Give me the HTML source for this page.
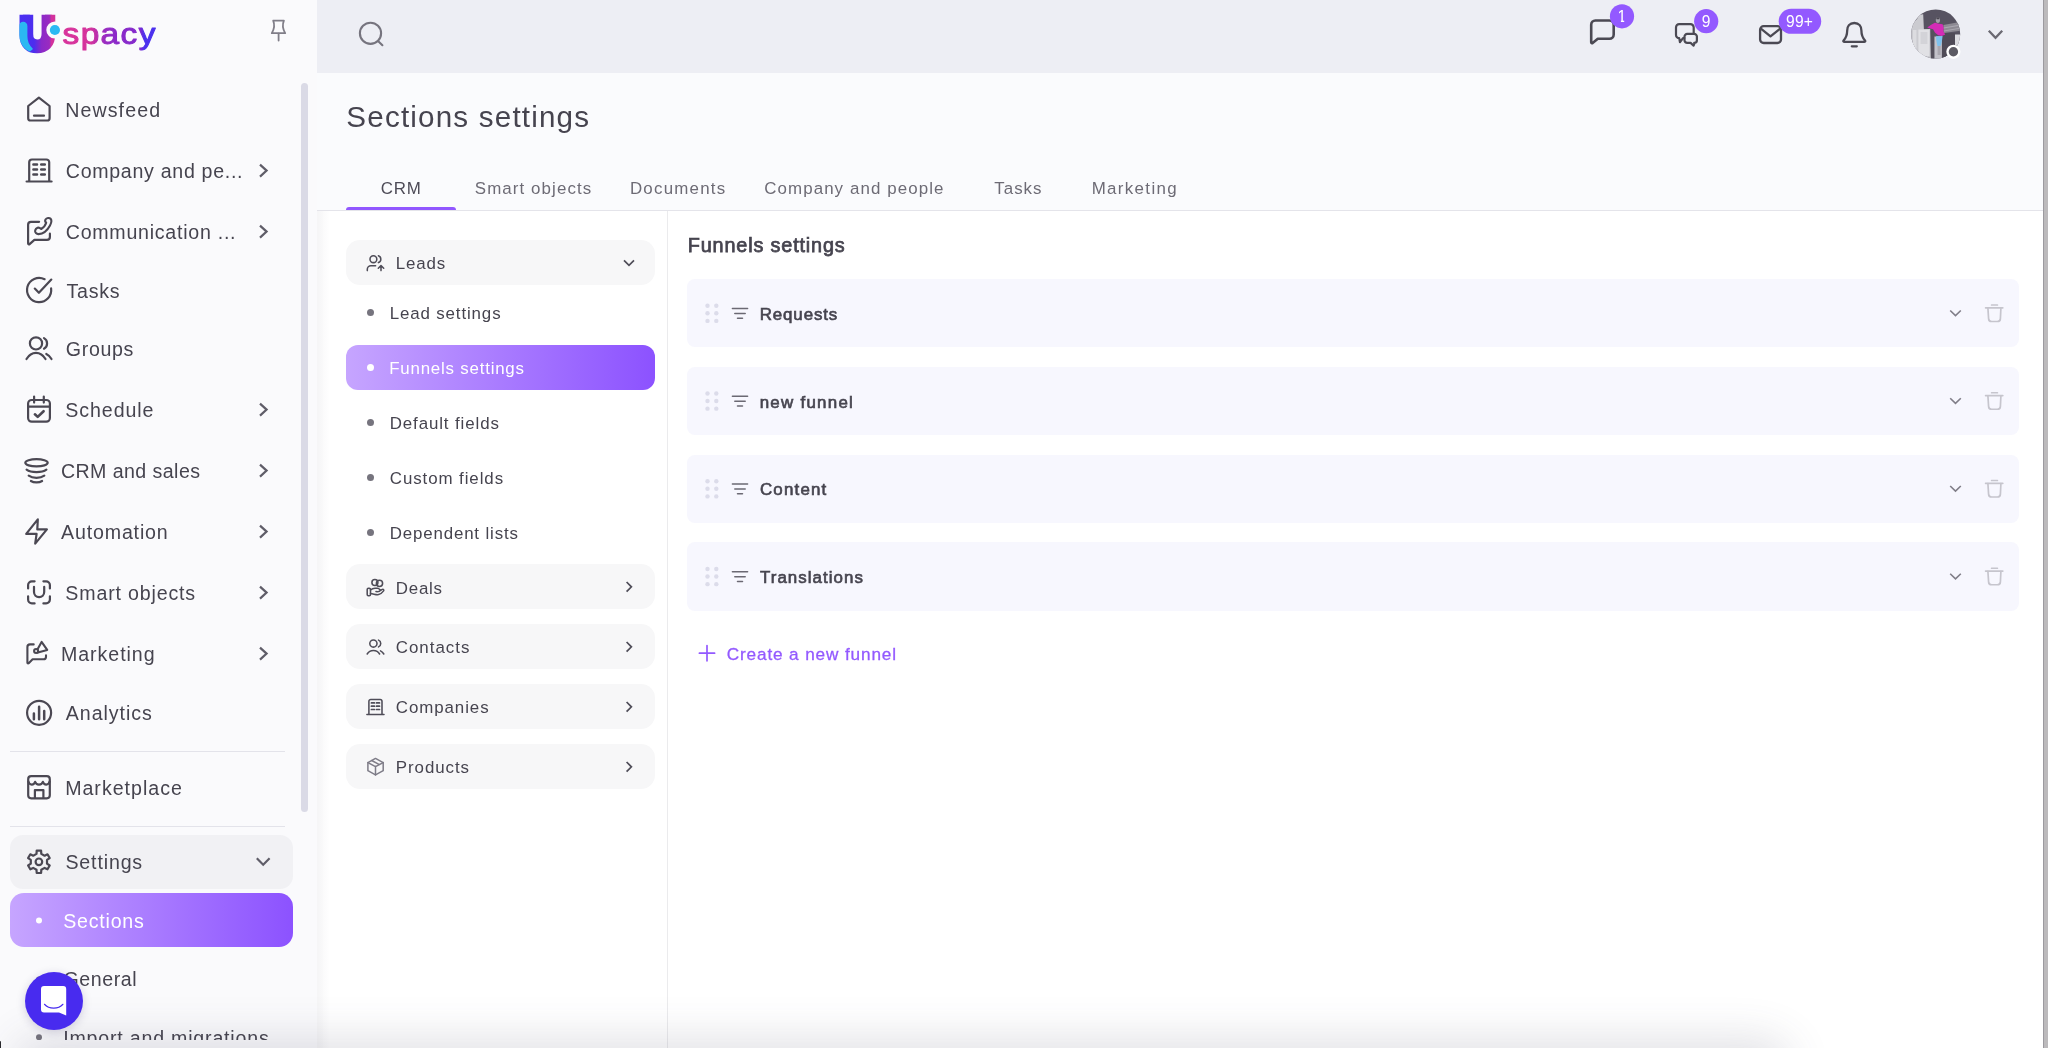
<!DOCTYPE html>
<html lang="en">
<head>
<meta charset="utf-8">
<title>Sections settings</title>
<style>
*{box-sizing:border-box;margin:0;padding:0}
html,body{width:2048px;height:1048px;overflow:hidden;background:#fff}
body{font-family:"Liberation Sans",sans-serif;color:#46444f;position:relative}
.abs{position:absolute}
svg{position:absolute;overflow:visible}
.ic{fill:none;stroke:#4b4853;stroke-width:2.2;stroke-linecap:round;stroke-linejoin:round}
.t{position:absolute;white-space:nowrap;line-height:1}

/* ---------- sidebar ---------- */
#side{position:absolute;left:0;top:0;width:317px;height:1048px;background:#fafafc;overflow:hidden}
#sideshadow{position:absolute;left:317px;top:0;width:12px;height:1048px;background:linear-gradient(90deg,rgba(70,68,90,.055),rgba(70,68,90,0))}
.nav{font-size:19.4px;letter-spacing:.55px;color:#46444f}
#sb{position:absolute;left:301px;top:83px;width:7px;height:729px;border-radius:4px;background:#dadae6}
.hr{position:absolute;left:10px;width:275px;height:1px;background:#e3e3ea}
#setbox{position:absolute;left:10px;top:835.4px;width:282.6px;height:53.4px;border-radius:13px;background:#f1f1f4}
#secbox{position:absolute;left:10px;top:893.2px;width:282.6px;height:53.8px;border-radius:14px;background:linear-gradient(90deg,#c6a5ff 0%,#a677ff 55%,#8c52ff 100%)}

/* ---------- topbar ---------- */
#top{position:absolute;left:317px;top:0;width:1726px;height:73px;background:#edeef4}
#rbar{position:absolute;left:2043px;top:0;width:5px;height:1048px;background:#bcbabc;border-left:1px solid #9c9a9f}
.badge{position:absolute;background:#9359ff;color:#fff;border-radius:12px;height:24px;font-size:15px;text-align:center;line-height:24px}

/* ---------- main ---------- */
#head{position:absolute;left:317px;top:73px;width:1726px;height:137px;background:#fafbfd}
#tabline{position:absolute;left:317px;top:210px;width:1726px;height:1px;background:#e4e4ea}
#tabact{position:absolute;left:346px;top:206.7px;width:110.2px;height:3.4px;border-radius:3px 3px 0 0;background:#9157ff}
.tab{font-size:17px;letter-spacing:.55px;color:#6a6872}
#vline{position:absolute;left:667px;top:211px;width:1px;height:837px;background:#ebebed}
.grp{position:absolute;left:346px;width:308.7px;height:45px;border-radius:14px;background:#f7f7f8}
.sub{font-size:17px;letter-spacing:.5px;color:#46444f}
.dot{position:absolute;width:7px;height:7px;border-radius:50%;background:#76747e}
#subact{position:absolute;left:346px;top:345px;width:308.7px;height:45px;border-radius:12px;background:linear-gradient(90deg,#c6a5ff 0%,#a677ff 55%,#8c52ff 100%)}
.row{position:absolute;left:687.4px;width:1331.6px;height:67px;border-radius:8px;background:#f7f7fe}
.rt{font-size:17px;font-weight:bold;letter-spacing:.25px;color:#46444f}
</style>
</head>
<body>

<!-- ================= SIDEBAR ================= -->
<div id="side">
  <svg id="logo" width="170" height="70" viewBox="0 0 170 70" style="left:0;top:0;will-change:transform">
    <defs>
      <linearGradient id="lgU" gradientUnits="userSpaceOnUse" x1="-0.9" y1="0" x2="34.4" y2="0">
        <stop offset="0" stop-color="#4a2ff2"/><stop offset=".42" stop-color="#4c2eee"/><stop offset=".62" stop-color="#8a29c9"/><stop offset=".84" stop-color="#9a2bc0"/><stop offset=".9" stop-color="#d2329c"/><stop offset="1" stop-color="#d2329c"/>
      </linearGradient>
      <linearGradient id="lgT" gradientUnits="userSpaceOnUse" x1="62.6" y1="0" x2="144.9" y2="0">
        <stop offset="0" stop-color="#d8339b"/><stop offset=".3" stop-color="#d4329c"/><stop offset=".45" stop-color="#9a2bc0"/><stop offset=".55" stop-color="#8c29c8"/><stop offset=".83" stop-color="#8229cc"/><stop offset=".88" stop-color="#4b30ee"/><stop offset="1" stop-color="#4b30ee"/>
      </linearGradient>
      <clipPath id="utop"><rect x="10" y="14.8" width="60" height="50"/></clipPath>
      <clipPath id="uclip"><path d="M19.4 14.8 H33.4 V35.6 a3.75 3.75 0 0 0 8.2 0 V14.8 H54.9 V35.6 a17.75 17.75 0 0 1 -35.5 0 Z"/></clipPath>
    </defs>
    <g clip-path="url(#utop)"><text x="0" y="0" font-family="Liberation Sans, sans-serif" font-weight="bold" font-size="47.3" fill="url(#lgU)" stroke="url(#lgU)" stroke-width="6.6" stroke-linejoin="miter" transform="translate(20 48.9) scale(1.02 1.157)">U</text></g>
    <g clip-path="url(#uclip)">
      <path d="M19 26 a4.2 4.2 0 0 1 8.4 0 V36 C27.4 41 29 45 33 49 L27 54 L19 44 Z" fill="#2bb8f2"/>
    </g>
    <circle cx="54.9" cy="30" r="8.6" fill="#fafafc"/>
    <circle cx="54.9" cy="30" r="5.1" fill="#2bb9f3"/>
    <text x="62.6" y="43.6" font-family="Liberation Sans, sans-serif" font-size="29.6" letter-spacing="1.2" fill="url(#lgT)" stroke="url(#lgT)" stroke-width="1.0" stroke-linejoin="round" transform="translate(62.6 0) scale(1.13 1) translate(-62.6 0)">spacy</text>
  </svg>

  <div id="sb"></div>
  <div id="setbox"></div>
  <div id="secbox"></div>
  <div class="hr" style="top:751px"></div>
  <div class="hr" style="top:826px"></div>
<svg id="navic" width="317" height="1048" viewBox="0 0 317 1048" style="left:0;top:0">
<g class="ic" stroke-width="2.3">
<!-- newsfeed -->
<path d="M38.9 97.7 L28.2 106 V118.2 a2.3 2.3 0 0 0 2.3 2.3 H47.3 a2.3 2.3 0 0 0 2.3 -2.3 V106 Z"/>
<path d="M34 115.7 H44"/>
<!-- company -->
<path d="M29.2 181 V162.3 a2.8 2.8 0 0 1 2.8 -2.8 H46.4 a2.8 2.8 0 0 1 2.8 2.8 V181"/>
<path d="M26.6 181.5 H51.6"/>
<path d="M33.4 164.6 H37 M41.2 164.6 H44.8 M33.4 169.5 H37 M41.2 169.5 H44.8 M33.4 174.4 H37 M41.2 174.4 H44.8" stroke-width="2.5"/>
<!-- communication -->
<path d="M39.1 221.8 H31 a2.9 2.9 0 0 0 -2.9 2.9 V243.4 a0.9 0.9 0 0 0 1.5 0.7 L34.4 239.9 H47 a2.9 2.9 0 0 0 2.9 -2.9 V233.7"/>
<path stroke-width="2.1" d="M35.2 230.4 C34.6 232.6 36.6 234.2 38.6 234.1 C43 233.9 47.4 230.2 50 225.4 C51.2 223.2 52 220.4 50.6 218.8 C49.4 217.4 46.6 217.8 45.5 219.5 C44.8 220.6 45.2 221.8 46.2 222.8 C45.4 225.4 43.6 227.6 41.2 229 C40 228 38.6 227.4 37.6 227.8 C36.4 228.3 35.5 229.3 35.2 230.4 Z"/>
<!-- tasks -->
<path d="M51.1 288.3 A12.1 12.1 0 1 1 44.6 279.2"/>
<path d="M34.8 288.6 L38.9 292.8 L51.3 279.6"/>
<!-- groups -->
<circle cx="36" cy="343.4" r="6.1"/>
<path d="M44 338.1 A6.1 6.1 0 0 1 44 348.7"/>
<path d="M26.5 359 C29 354.8 32.4 352.9 36 352.9 C39.6 352.9 43 354.8 45.5 359"/>
<path d="M46.3 354 C48.4 355 50.2 356.8 51.5 359"/>
<!-- schedule -->
<rect x="28.1" y="400" width="21.8" height="21.7" rx="3.6"/>
<path d="M28.1 406.7 H49.9 M34.1 396.6 V402.6 M43.8 396.6 V402.6"/>
<path d="M34.9 414.3 L37.7 416.9 L43.6 411.2" stroke-width="2.6"/>
<!-- crm -->
<ellipse cx="36.5" cy="462.8" rx="11.2" ry="3.6"/>
<path d="M26.6 469.6 C31 472.9 42 472.9 46.4 469.6 M28.7 475.6 C32.6 478.5 40.4 478.5 44.3 475.6 M30.9 481 C33.8 482.9 39.2 482.9 42.1 481"/>
<!-- automation -->
<path d="M37.8 519.4 L26.2 533.9 H36.6 L35.2 543.6 L46.9 529.4 H37.3 Z"/>
<!-- smart objects -->
<path d="M28.1 588.4 V585.1 a3.8 3.8 0 0 1 3.8 -3.8 H34.6 M43.4 581.3 H46.1 a3.8 3.8 0 0 1 3.8 3.8 V588.4 M49.9 596.3 V599.6 a3.8 3.8 0 0 1 -3.8 3.8 H43.4 M34.6 603.4 H31.9 a3.8 3.8 0 0 1 -3.8 -3.8 V596.3"/>
<path d="M34 586.8 V592 a5.1 5.1 0 0 0 10.2 0 V586.8"/>
<!-- marketing -->
<g stroke-width="2.1">
<path d="M33.7 644.4 H30 a2.6 2.6 0 0 0 -2.6 2.6 V662.6 a0.8 0.8 0 0 0 1.3 0.6 L32.6 659.3 H43.4 a2.6 2.6 0 0 0 2.6 -2.6 V655.4"/>
<path d="M37.4 649.4 L41.6 641.9 L47.2 649.9 L37.9 652.6"/>
<circle cx="36.1" cy="651" r="2"/>
</g>
<!-- analytics -->
<circle cx="39.1" cy="712.8" r="12"/>
<path d="M33.9 713.6 V719.2 M39.1 706.8 V719.2 M44.2 711 V719.2" stroke-width="2.5"/>
<!-- marketplace -->
<rect x="28.2" y="776.2" width="21.6" height="22.1" rx="3"/>
<path d="M28.4 781.6 C29.4 785.6 34 785.6 35.1 781.8 C36.2 785.6 41.8 785.6 42.9 781.8 C44 785.6 48.6 785.6 49.6 781.6"/>
<path d="M34.9 798 V790.1 H43.4 V798"/>
<!-- settings gear -->
<path d="M36.5 853.9 L36.7 850.6 L41.1 850.6 L41.3 853.9 L44.6 855.7 L47.5 854.3 L49.7 858.1 L47.0 859.9 L47.0 863.7 L49.7 865.5 L47.5 869.3 L44.6 867.9 L41.3 869.7 L41.1 873.0 L36.7 873.0 L36.5 869.7 L33.2 867.9 L30.3 869.3 L28.1 865.5 L30.8 863.7 L30.8 859.9 L28.1 858.1 L30.3 854.3 L33.2 855.7 Z"/>
<circle cx="38.9" cy="861.8" r="3.3"/>
</g>
<!-- chevrons -->
<g fill="none" stroke="#5f5d68" stroke-width="2.2" stroke-linejoin="miter">
<path d="M260 164.6 L266.6 170.6 L260 176.6"/>
<path d="M260 225.6 L266.6 231.6 L260 237.6"/>
<path d="M260 403.6 L266.6 409.6 L260 415.6"/>
<path d="M260 464.6 L266.6 470.6 L260 476.6"/>
<path d="M260 525.6 L266.6 531.6 L260 537.6"/>
<path d="M260 586.6 L266.6 592.6 L260 598.6"/>
<path d="M260 647.6 L266.6 653.6 L260 659.6"/>
<path d="M256.8 858.3 L263.2 864.7 L269.6 858.3"/>
</g>
<!-- pin -->
<g fill="none" stroke="#807e88" stroke-width="1.8" stroke-linejoin="round" stroke-linecap="round">
<path d="M273.2 20.6 H283.9 C282 25 282.2 28 285.2 33.2 H271.8 C274.8 28 275 25 273.2 20.6 Z"/>
<path d="M278.6 33.6 V40.6"/>
</g>
<!-- bullets -->
<circle cx="39" cy="920.5" r="3" fill="#fff"/>
<circle cx="39" cy="979.5" r="3" fill="#76747e"/>
<circle cx="39" cy="1037.2" r="3" fill="#76747e"/>
</svg>

</div>
<div id="sideshadow"></div>

<!-- ================= TOPBAR ================= -->
<div id="top"></div>
<svg id="topic" width="1731" height="72" viewBox="317 0 1731 72" style="left:317px;top:0;will-change:transform">
  <defs><clipPath id="avc"><circle cx="1935.7" cy="34" r="24.5"/></clipPath></defs>
  <!-- search -->
  <g fill="none" stroke="#76747e" stroke-width="2.1" stroke-linecap="round">
    <circle cx="370.5" cy="33.3" r="10.6"/><path d="M378 41 L382.4 45.2"/>
  </g>
  <g fill="none" stroke="#4b4953" stroke-linecap="round" stroke-linejoin="round">
    <!-- chat -->
    <path stroke-width="2.6" d="M1595.4 20.5 H1609.5 a4.2 4.2 0 0 1 4.2 4.2 V34.5 a4.2 4.2 0 0 1 -4.2 4.2 H1597.8 L1592.6 42.9 a0.85 0.85 0 0 1 -1.4 -0.65 V24.7 a4.2 4.2 0 0 1 4.2 -4.2 Z"/>
    <!-- chats -->
    <g stroke-width="2.2">
    <path d="M1684.3 38.1 H1683 L1680 42.2 L1679.2 38.1 a3.2 3.2 0 0 1 -3.2 -3.2 V27.4 a3.2 3.2 0 0 1 3.2 -3.2 H1690.5 a3.2 3.2 0 0 1 3.2 3.2 V33.6"/>
    <path d="M1687.2 33.9 H1694.2 a2.7 2.7 0 0 1 2.7 2.7 V40.2 a2.7 2.7 0 0 1 -2.7 2.7 H1694.6 L1693.6 45.6 L1690.6 42.9 H1687.2 a2.7 2.7 0 0 1 -2.7 -2.7 V36.6 a2.7 2.7 0 0 1 2.7 -2.7 Z"/>
    </g>
    <!-- mail -->
    <g stroke-width="2.3">
    <rect x="1760.1" y="26.2" width="20.9" height="16.8" rx="3.6"/>
    <path d="M1761.2 28.8 L1770.5 36.4 L1779.9 28.8"/>
    </g>
    <!-- bell -->
    <g stroke-width="2.3">
    <path d="M1854.3 23 C1849.4 23 1847.2 26.8 1847.2 30.4 C1847.2 35.6 1845.4 38.4 1843.6 40.4 C1843 41.1 1843.5 41.9 1844.4 41.9 H1864.2 C1865.1 41.9 1865.6 41.1 1865 40.4 C1863.2 38.4 1861.4 35.6 1861.4 30.4 C1861.4 26.8 1859.2 23 1854.3 23 Z"/>
    <path d="M1851.8 46.3 H1856.8"/>
    </g>
  </g>
  <!-- avatar -->
  <g clip-path="url(#avc)">
    <rect x="1910" y="8" width="52" height="52" fill="#575361"/>
    <path d="M1911.1 24.2 L1917 19 L1919.2 14.7 L1923.2 14.3 L1923.9 29.3 L1930.2 28.9 L1930.9 58.6 H1910 Z" fill="#cbcbd0"/>
    <path d="M1918.4 29.6 H1929.4 V56 H1918.4 Z" fill="#e1e1e5"/>
    <path d="M1920.6 32 H1927.4 V44 H1920.6 Z" fill="#d3d3d8"/>
    <path d="M1913 30 H1916.4 V52 H1913 Z" fill="#dcdce0"/>
    <path d="M1934.2 36.6 H1942 V59 H1934.2 Z" fill="#c2c1c8"/>
    <path d="M1930.9 30.8 H1934.3 V59 H1930.9 Z" fill="#55515c"/>
    <path d="M1941.9 33 H1955.2 V51 L1946 59 H1941.9 Z" fill="#4f4b57"/>
    <path d="M1943.4 24.9 L1959.5 22 L1960.5 30.8 L1943.7 33 Z" fill="#8d8a93"/>
    <path d="M1943.5 27.4 L1960 24.6 V25.8 L1943.6 28.6 Z M1943.6 30.4 L1960 27.8 V28.8 L1943.6 31.4 Z" fill="#aaa7b0"/>
    <path d="M1955 34.4 H1961 V45.6 H1955 Z" fill="#dcdce1"/>
    <ellipse cx="1937.9" cy="19.9" rx="2.1" ry="3" fill="#a29ea8"/>
    <path d="M1936.4 17.2 h3 v2 h-3 Z" fill="#4a4651"/>
    <path d="M1927.2 27.5 L1931.6 24.5 L1934.9 22.7 L1939 23.8 L1942.6 24.2 L1943.7 27.8 L1943.4 31.5 L1945.2 34.4 L1941.9 35.9 L1938.2 35.2 L1934.9 32.6 L1933.1 29.3 L1929.4 28.2 Z" fill="#d42cb6"/>
    <path d="M1936 36.3 L1942.6 35.9 L1941.9 41 L1940.8 45.8 L1937.5 46.2 L1936.4 41 Z" fill="#7fc1ec"/>
    <path d="M1937.6 46 h3 v9 h-3 Z" fill="#a9a7af"/>
  </g>
  <circle cx="1953.4" cy="51.8" r="7.1" fill="#fff"/>
  <circle cx="1953.4" cy="51.8" r="4.7" fill="#5d5b64"/>
  <path d="M1988.8 30.8 L1995.5 37.8 L2002.2 30.8" fill="none" stroke="#6b6972" stroke-width="2.3"/>
  <!-- badges -->
  <circle cx="1622" cy="16.3" r="12.1" fill="#9359ff"/>
  <circle cx="1706.2" cy="21.2" r="12.1" fill="#9359ff"/>
  <rect x="1778.7" y="8.8" width="42.5" height="25" rx="12.5" fill="#9359ff"/>
  <g font-family="Liberation Sans, sans-serif" font-size="15.6" fill="#fff" text-anchor="middle">
    <text x="1621.9" y="21.8">1</text>
    <path d="M1617 20 h3.9 v2.8 h-3.9 Z M1624.2 20 h3 v2.8 h-3 Z" fill="#9359ff"/>
    <text x="1706.2" y="26.7">9</text>
    <text x="1799.6" y="26.8" letter-spacing="0.3">99+</text>
  </g>
</svg>


<!-- ================= MAIN ================= -->
<div id="head"></div>
<div id="tabline"></div>
<div id="tabact"></div>
<div id="vline"></div>
<div class="grp" style="top:240px"></div>
<div id="subact"></div>
<div class="dot" style="left:367px;top:309px"></div>
<div class="dot" style="left:367px;top:364px;background:#fff"></div>
<div class="dot" style="left:367px;top:419px"></div>
<div class="dot" style="left:367px;top:474px"></div>
<div class="dot" style="left:367px;top:529px"></div>
<div class="grp" style="top:564px"></div>
<div class="grp" style="top:624px"></div>
<div class="grp" style="top:684px"></div>
<div class="grp" style="top:744px"></div>

<div class="row" style="top:279px;height:68px"></div>
<div class="row" style="top:367px;height:68px"></div>
<div class="row" style="top:455px;height:68px"></div>
<div class="row" style="top:542px;height:69px"></div>
<svg id="mainic" width="1731" height="838" viewBox="317 210 1731 838" style="left:317px;top:210px">
<g fill="none" stroke="#4f4d58" stroke-width="1.55" stroke-linecap="round" stroke-linejoin="round">
<!-- leads -->
<circle cx="373.4" cy="259.2" r="3.4"/>
<path d="M378.4 255.8 A3.6 3.6 0 0 1 378.4 262.6"/>
<path d="M367.3 270.6 V269.3 a3.6 3.6 0 0 1 3.6 -3.6 H375.6"/>
<path d="M381 270.6 V265.6 M378.3 268.2 L381 265.5 L383.7 268.2"/>
<!-- deals -->
<circle cx="374.9" cy="582.4" r="3"/>
<circle cx="379.5" cy="583.3" r="3.1"/>
<rect x="367.2" y="588.3" width="3.3" height="7.4" rx="1.2"/>
<path d="M370.5 590 C372 588.6 373.4 588.2 375 588.2 H377.6 C379 588.2 379.8 589.6 380.6 590.3 C379.8 591.6 378 591.8 376 591.6"/>
<path d="M380.6 590.3 L382.4 589.4 C383.4 589 384.2 590 383.6 590.9 C382 593 380 594.4 378.6 594.6 C376 595 373.6 593.8 370.5 593.6"/>
<!-- contacts -->
<circle cx="373.4" cy="643.5" r="3.6"/>
<path d="M378.5 640.1 A3.7 3.7 0 0 1 378.5 646.9"/>
<path d="M367.2 654 C368.6 651.6 370.8 650.5 373.4 650.5 C376 650.5 378.2 651.6 379.6 654"/>
<path d="M380.5 650.9 C381.9 651.6 383 652.6 383.8 654"/>
<!-- companies -->
<path d="M368.9 714.2 V701.4 a1.9 1.9 0 0 1 1.9 -1.9 H380.1 a1.9 1.9 0 0 1 1.9 1.9 V714.2"/>
<path d="M366.9 714.5 H384"/>
<path d="M371.4 702.9 H374.4 M376.5 702.9 H379.5 M371.4 706.2 H374.4 M376.5 706.2 H379.5 M371.4 709.5 H374.4 M376.5 709.5 H379.5" stroke-width="1.7"/>
</g>
<!-- products -->
<g fill="none" stroke="#7e7c87" stroke-width="1.5" stroke-linecap="round" stroke-linejoin="round">
<path d="M375.5 758.4 L383.2 762.6 V770.7 L375.5 774.9 L367.9 770.7 V762.6 Z"/>
<path d="M367.9 762.6 L375.5 766.6 L383.2 762.6 M375.5 766.6 V774.9 M371.7 760.5 L379.4 764.6"/>
</g>
<g fill="none" stroke="#4f4d58" stroke-width="1.7" stroke-linejoin="miter">
<path d="M624 260.4 L629 265.4 L634 260.4"/>
<path d="M626.6 582 L631.4 586.8 L626.6 591.6"/>
<path d="M626.6 642 L631.4 646.8 L626.6 651.6"/>
<path d="M626.6 702 L631.4 706.8 L626.6 711.6"/>
<path d="M626.6 762 L631.4 766.8 L626.6 771.6"/>
</g>
<g transform="translate(0 0.00)">
<g fill="#dcdcea"><circle cx="707.5" cy="305.7" r="2.2"/><circle cx="707.5" cy="313.3" r="2.2"/><circle cx="707.5" cy="320.9" r="2.2"/><circle cx="716.3" cy="305.7" r="2.2"/><circle cx="716.3" cy="313.3" r="2.2"/><circle cx="716.3" cy="320.9" r="2.2"/></g>
<path d="M732.4 308.5 H747.6 M734.8 313.4 H745.2 M737.5 318.3 H742.5" fill="none" stroke="#6b6973" stroke-width="1.5" stroke-linecap="round"/>
<path d="M1950.2 310.5 L1955.5 315.6 L1960.8 310.5" fill="none" stroke="#807e88" stroke-width="1.6"/>
<g fill="none" stroke="#c6c5cd" stroke-width="1.7" stroke-linecap="round" stroke-linejoin="round"><path d="M1985.6 307.8 H2002.8 M1991.6 305 H1997.4"/><path d="M1987.9 308 L1988.6 318.6 a3 3 0 0 0 3 2.9 H1997.4 a3 3 0 0 0 3 -2.9 L2000.9 308"/></g>
</g>
<g transform="translate(0 87.75)">
<g fill="#dcdcea"><circle cx="707.5" cy="305.7" r="2.2"/><circle cx="707.5" cy="313.3" r="2.2"/><circle cx="707.5" cy="320.9" r="2.2"/><circle cx="716.3" cy="305.7" r="2.2"/><circle cx="716.3" cy="313.3" r="2.2"/><circle cx="716.3" cy="320.9" r="2.2"/></g>
<path d="M732.4 308.5 H747.6 M734.8 313.4 H745.2 M737.5 318.3 H742.5" fill="none" stroke="#6b6973" stroke-width="1.5" stroke-linecap="round"/>
<path d="M1950.2 310.5 L1955.5 315.6 L1960.8 310.5" fill="none" stroke="#807e88" stroke-width="1.6"/>
<g fill="none" stroke="#c6c5cd" stroke-width="1.7" stroke-linecap="round" stroke-linejoin="round"><path d="M1985.6 307.8 H2002.8 M1991.6 305 H1997.4"/><path d="M1987.9 308 L1988.6 318.6 a3 3 0 0 0 3 2.9 H1997.4 a3 3 0 0 0 3 -2.9 L2000.9 308"/></g>
</g>
<g transform="translate(0 175.50)">
<g fill="#dcdcea"><circle cx="707.5" cy="305.7" r="2.2"/><circle cx="707.5" cy="313.3" r="2.2"/><circle cx="707.5" cy="320.9" r="2.2"/><circle cx="716.3" cy="305.7" r="2.2"/><circle cx="716.3" cy="313.3" r="2.2"/><circle cx="716.3" cy="320.9" r="2.2"/></g>
<path d="M732.4 308.5 H747.6 M734.8 313.4 H745.2 M737.5 318.3 H742.5" fill="none" stroke="#6b6973" stroke-width="1.5" stroke-linecap="round"/>
<path d="M1950.2 310.5 L1955.5 315.6 L1960.8 310.5" fill="none" stroke="#807e88" stroke-width="1.6"/>
<g fill="none" stroke="#c6c5cd" stroke-width="1.7" stroke-linecap="round" stroke-linejoin="round"><path d="M1985.6 307.8 H2002.8 M1991.6 305 H1997.4"/><path d="M1987.9 308 L1988.6 318.6 a3 3 0 0 0 3 2.9 H1997.4 a3 3 0 0 0 3 -2.9 L2000.9 308"/></g>
</g>
<g transform="translate(0 263.25)">
<g fill="#dcdcea"><circle cx="707.5" cy="305.7" r="2.2"/><circle cx="707.5" cy="313.3" r="2.2"/><circle cx="707.5" cy="320.9" r="2.2"/><circle cx="716.3" cy="305.7" r="2.2"/><circle cx="716.3" cy="313.3" r="2.2"/><circle cx="716.3" cy="320.9" r="2.2"/></g>
<path d="M732.4 308.5 H747.6 M734.8 313.4 H745.2 M737.5 318.3 H742.5" fill="none" stroke="#6b6973" stroke-width="1.5" stroke-linecap="round"/>
<path d="M1950.2 310.5 L1955.5 315.6 L1960.8 310.5" fill="none" stroke="#807e88" stroke-width="1.6"/>
<g fill="none" stroke="#c6c5cd" stroke-width="1.7" stroke-linecap="round" stroke-linejoin="round"><path d="M1985.6 307.8 H2002.8 M1991.6 305 H1997.4"/><path d="M1987.9 308 L1988.6 318.6 a3 3 0 0 0 3 2.9 H1997.4 a3 3 0 0 0 3 -2.9 L2000.9 308"/></g>
</g>
<path d="M699.4 653.2 H714.6 M707 645.6 V660.8" fill="none" stroke="#9359ff" stroke-width="1.7" stroke-linecap="round"/>
</svg>

<div id="txt" style="position:absolute;left:0;top:0;width:2048px;height:1048px;will-change:transform">
<div class="t" style="left:65.17px;top:101.00px;font-size:19.6px;letter-spacing:1.118px;color:#46444f">Newsfeed</div>
<div class="t" style="left:65.79px;top:162.00px;font-size:19.6px;letter-spacing:0.700px;color:#46444f">Company and pe...</div>
<div class="t" style="left:65.79px;top:223.00px;font-size:19.6px;letter-spacing:0.739px;color:#46444f">Communication ...</div>
<div class="t" style="left:66.53px;top:282.00px;font-size:19.6px;letter-spacing:0.746px;color:#46444f">Tasks</div>
<div class="t" style="left:65.79px;top:340.00px;font-size:19.6px;letter-spacing:0.675px;color:#46444f">Groups</div>
<div class="t" style="left:65.35px;top:401.00px;font-size:19.6px;letter-spacing:0.910px;color:#46444f">Schedule</div>
<div class="t" style="left:60.89px;top:462.00px;font-size:19.6px;letter-spacing:0.435px;color:#46444f">CRM and sales</div>
<div class="t" style="left:61.08px;top:523.00px;font-size:19.6px;letter-spacing:0.834px;color:#46444f">Automation</div>
<div class="t" style="left:65.35px;top:584.00px;font-size:19.6px;letter-spacing:0.836px;color:#46444f">Smart objects</div>
<div class="t" style="left:60.97px;top:645.00px;font-size:19.6px;letter-spacing:0.952px;color:#46444f">Marketing</div>
<div class="t" style="left:65.78px;top:704.00px;font-size:19.6px;letter-spacing:0.948px;color:#46444f">Analytics</div>
<div class="t" style="left:65.17px;top:779.00px;font-size:19.6px;letter-spacing:0.995px;color:#46444f">Marketplace</div>
<div class="t" style="left:65.45px;top:853.00px;font-size:19.6px;letter-spacing:0.848px;color:#46444f">Settings</div>
<div class="t" style="left:63.15px;top:912.00px;font-size:19.6px;letter-spacing:0.794px;color:#fff">Sections</div>
<div class="t" style="left:63.39px;top:970.00px;font-size:19.6px;letter-spacing:0.586px;color:#46444f">General</div>
<div class="t" style="left:63.21px;top:1029.00px;font-size:19.6px;letter-spacing:0.799px;color:#46444f">Import and migrations</div>
<div class="t" style="left:346.37px;top:102.00px;font-size:29.6px;letter-spacing:1.186px;color:#46444f">Sections settings</div>
<div class="t" style="left:380.77px;top:181.00px;font-size:16.9px;letter-spacing:0.805px;color:#4d4b57">CRM</div>
<div class="t" style="left:474.79px;top:181.00px;font-size:16.9px;letter-spacing:1.098px;color:#6d6b75">Smart objects</div>
<div class="t" style="left:629.96px;top:181.00px;font-size:16.9px;letter-spacing:1.217px;color:#6d6b75">Documents</div>
<div class="t" style="left:764.17px;top:181.00px;font-size:16.9px;letter-spacing:1.104px;color:#6d6b75">Company and people</div>
<div class="t" style="left:994.28px;top:181.00px;font-size:16.9px;letter-spacing:1.021px;color:#6d6b75">Tasks</div>
<div class="t" style="left:1091.66px;top:181.00px;font-size:16.9px;letter-spacing:1.356px;color:#6d6b75">Marketing</div>
<div class="t" style="left:395.86px;top:256.00px;font-size:16.9px;letter-spacing:0.837px;color:#46444f">Leads</div>
<div class="t" style="left:389.66px;top:306.00px;font-size:16.9px;letter-spacing:0.870px;color:#46444f">Lead settings</div>
<div class="t" style="left:389.16px;top:361.00px;font-size:16.9px;letter-spacing:0.790px;color:#fff">Funnels settings</div>
<div class="t" style="left:389.66px;top:416.00px;font-size:16.9px;letter-spacing:0.895px;color:#46444f">Default fields</div>
<div class="t" style="left:389.77px;top:471.00px;font-size:16.9px;letter-spacing:0.917px;color:#46444f">Custom fields</div>
<div class="t" style="left:389.66px;top:526.00px;font-size:16.9px;letter-spacing:0.845px;color:#46444f">Dependent lists</div>
<div class="t" style="left:395.86px;top:581.00px;font-size:16.9px;letter-spacing:0.752px;color:#46444f">Deals</div>
<div class="t" style="left:395.77px;top:640.00px;font-size:16.9px;letter-spacing:1.003px;color:#46444f">Contacts</div>
<div class="t" style="left:395.77px;top:700.00px;font-size:16.9px;letter-spacing:0.928px;color:#46444f">Companies</div>
<div class="t" style="left:395.86px;top:760.00px;font-size:16.9px;letter-spacing:0.919px;color:#46444f">Products</div>
<div class="t" style="left:687.83px;top:236.00px;font-size:19.8px;letter-spacing:0.856px;color:#46444f;-webkit-text-stroke:0.75px #46444f">Funnels settings</div>
<div class="t" style="left:759.67px;top:307.00px;font-size:16.9px;letter-spacing:0.900px;color:#46444f;-webkit-text-stroke:0.65px #46444f">Requests</div>
<div class="t" style="left:759.69px;top:395.00px;font-size:16.9px;letter-spacing:1.276px;color:#46444f;-webkit-text-stroke:0.65px #46444f">new funnel</div>
<div class="t" style="left:759.96px;top:482.00px;font-size:16.9px;letter-spacing:1.188px;color:#46444f;-webkit-text-stroke:0.65px #46444f">Content</div>
<div class="t" style="left:759.98px;top:570.00px;font-size:16.9px;letter-spacing:1.054px;color:#46444f;-webkit-text-stroke:0.65px #46444f">Translations</div>
<div class="t" style="left:726.72px;top:646.00px;font-size:17.2px;letter-spacing:0.862px;color:#9359ff;-webkit-text-stroke:0.3px #9359ff">Create a new funnel</div>
</div>
<div style="position:absolute;left:0;top:1040px;width:317px;height:8px;background:#fafafc"></div>
<div style="position:absolute;left:30px;top:1054px;width:1745px;height:30px;border-radius:40px;box-shadow:0 0 44px 16px rgba(70,70,95,.155)"></div>
<div style="position:absolute;left:0;top:1040.5px;width:1.3px;height:8px;background:#2a2a2e;border-radius:0 1.5px 0 0"></div>
<div id="rbar"></div>
<div id="chatw" style="position:absolute;left:24.7px;top:971.5px;width:58px;height:58px;border-radius:50%;background:#482bef;box-shadow:0 2px 10px rgba(40,30,90,.18)"></div>
<svg width="70" height="70" viewBox="20 965 70 70" style="left:20px;top:965px">
<path d="M44 986 H63.2 a3 3 0 0 1 3 3 V1015.4 L59 1012.5 H44 a3 3 0 0 1 -3 -3 V989 a3 3 0 0 1 3 -3 Z" fill="#fff"/>
<path d="M44.6 1004.4 C49 1009.4 58.4 1009.4 62.8 1004.4" fill="none" stroke="#482bef" stroke-width="1.4" stroke-linecap="round"/>
</svg>
</body>
</html>
